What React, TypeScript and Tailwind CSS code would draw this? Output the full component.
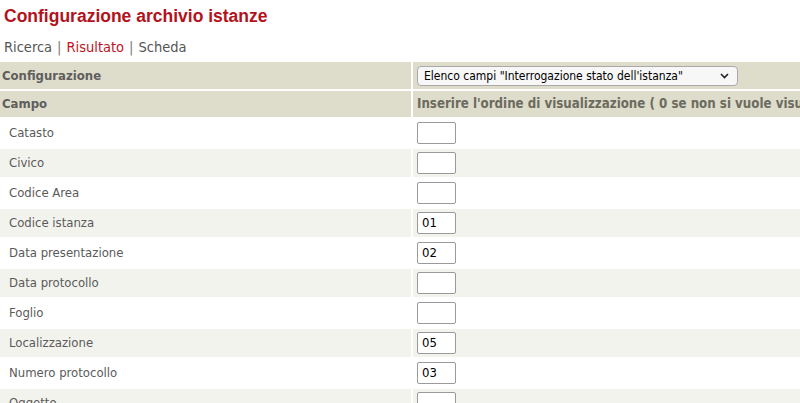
import React from 'react';

const rows: { label: string; value: string }[] = [
  { label: 'Catasto', value: '' },
  { label: 'Civico', value: '' },
  { label: 'Codice Area', value: '' },
  { label: 'Codice istanza', value: '01' },
  { label: 'Data presentazione', value: '02' },
  { label: 'Data protocollo', value: '' },
  { label: 'Foglio', value: '' },
  { label: 'Localizzazione', value: '05' },
  { label: 'Numero protocollo', value: '03' },
  { label: 'Oggetto', value: '' },
  { label: 'Particella', value: '' },
];

export default function App() {
  return (
    <div className="w-[800px] h-[403px] overflow-hidden bg-white font-['DejaVu_Sans_Condensed',sans-serif]">
      {/* Titolo */}
      <h1 className="pl-[4px] pt-[3px] h-[32px] text-[17.5px] font-bold text-[#b3121b] font-['Liberation_Sans',Arial,sans-serif]">
        Configurazione archivio istanze
      </h1>

      {/* Navigazione */}
      <div className="pl-[4px] h-[30px] text-[14.5px] leading-[30px] text-[#555]">
        <span>Ricerca</span>
        <span className="mx-[5px] text-[#777]">|</span>
        <span className="text-[#c0121c]">Risultato</span>
        <span className="mx-[5px] text-[#777]">|</span>
        <span>Scheda</span>
      </div>

      <div className="flex flex-col gap-[2px] whitespace-nowrap">
        <div className="flex gap-[2px] h-[27px]">
          <div className="w-[411px] bg-[#dedcca] pl-[2px] flex items-center text-[13px] font-bold text-[#5e5e5e]">
            Configurazione
          </div>
          <div className="flex-1 bg-[#dedcca] pl-[4px] flex items-center">
            <div className="w-[321px] h-[20px] rounded-[4px] border border-[#a9a9a9] bg-[#f7f7f7] flex items-center justify-between pl-[6px] pr-[8px] text-[12px] text-black">
              <span>Elenco campi "Interrogazione stato dell'istanza"</span>
              <svg width="9" height="6" viewBox="0 0 9 6" fill="none">
                <path d="M1 1l3.5 3.5L8 1" stroke="#222" strokeWidth="1.6" />
              </svg>
            </div>
          </div>
        </div>

        <div className="flex gap-[2px] h-[26px]">
          <div className="w-[411px] bg-[#dedcca] pl-[2px] flex items-center text-[13px] font-bold text-[#5e5e5e]">
            Campo
          </div>
          <div className="flex-1 overflow-hidden bg-[#dedcca] pl-[4px] flex items-center text-[13.2px] font-bold text-[#6b6b5f]">
            Inserire l'ordine di visualizzazione ( 0 se non si vuole visualizzare il campo )
          </div>
        </div>

        {rows.map((r, i) => (
          <div key={r.label} className="flex gap-[2px] h-[28px]">
            <div
              className={`w-[411px] pl-[9px] flex items-center text-[13px] text-[#5a5a5a] ${
                i % 2 === 1 ? 'bg-[#f3f3ee]' : 'bg-white'
              }`}
            >
              {r.label}
            </div>
            <div className={`flex-1 pl-[4px] flex items-center ${i % 2 === 1 ? 'bg-[#f3f3ee]' : 'bg-white'}`}>
              <div className="w-[39px] h-[22px] rounded-[2px] border border-[#9a9a9a] bg-white pl-[4px] flex items-center text-[13px] text-black">
                {r.value}
              </div>
            </div>
          </div>
        ))}
      </div>
    </div>
  );
}
